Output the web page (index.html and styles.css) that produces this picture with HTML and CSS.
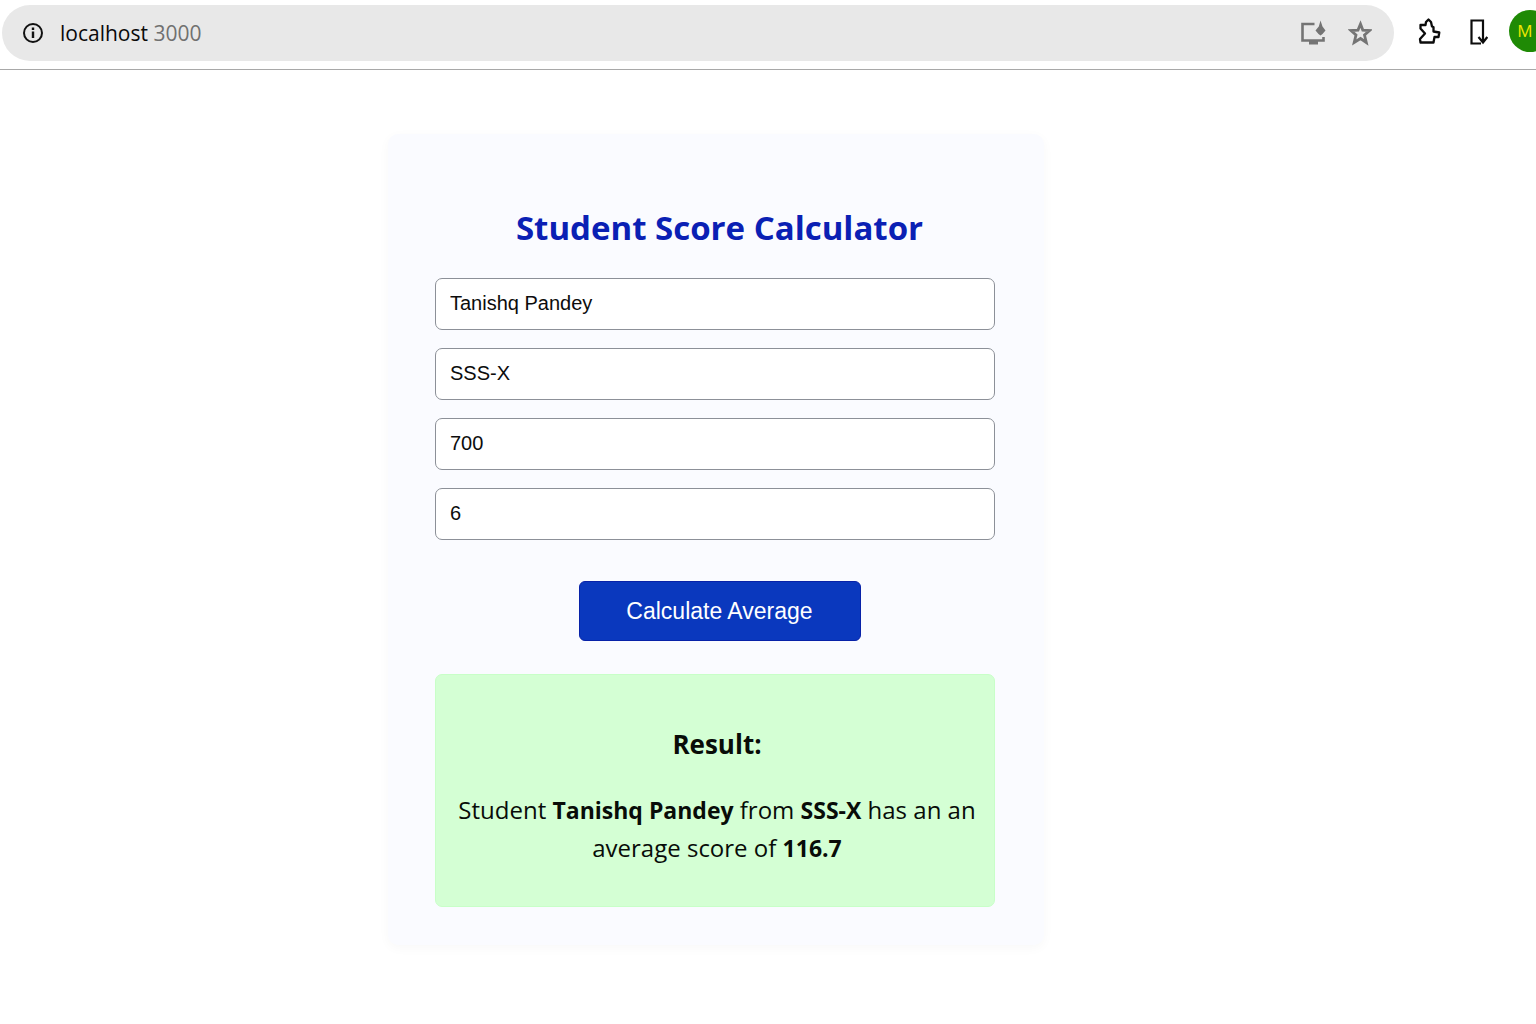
FILE: index.html
```html
<!DOCTYPE html>
<html lang="en">
<head>
<meta charset="utf-8">
<meta name="viewport" content="width=device-width, initial-scale=1">
<title>Student Score Calculator</title>
<link rel="stylesheet" href="styles.css">
</head>
<body>
<header class="toolbar">
  <div class="address">
    <button class="icon-button" type="button" aria-label="Site information">
      <svg width="22" height="22" viewBox="0 0 22 22" fill="none" stroke="#111" stroke-width="2"><circle cx="11" cy="11" r="9"/><path d="M11 9.5V16M11 5.5V8" stroke-width="2.4"/></svg>
    </button>
    <a class="url" href="#">localhost <span class="port">3000</span></a>
    <div class="address-actions">
      <button class="icon-button" type="button" aria-label="Install app">
        <svg width="26" height="26" viewBox="0 0 26 26"><path d="M14.5 4H2.500V20.500H23.500V17" fill="none" stroke="#747474" stroke-width="2.600"/><path d="M9 21h9v3.500H9z" fill="#747474"/><path d="M20.500 0.500L22.500 6.500L25.500 10.500L22.500 14L20.500 15.500L18.500 14L15.500 10.500L18.800 6.500Z" fill="#747474"/></svg>
      </button>
      <button class="icon-button" type="button" aria-label="Bookmark this page">
        <svg width="24" height="26" viewBox="0 0 24 26" fill="none" stroke="#747474" stroke-width="2.800"><path d="M12.500 4L14.800 10.100L21.500 10.500L16.500 15L18.300 22.500L12.500 18.500L6.200 22.500L8 15L3 10.500L10 10.100Z"/></svg>
      </button>
    </div>
  </div>
  <nav class="browser-actions" aria-label="Browser">
    <button class="icon-button" type="button" aria-label="Extensions">
      <svg width="24" height="28" viewBox="0 0 24 28" fill="none" stroke="#0c0c0c" stroke-width="2.300" stroke-linejoin="round"><path d="M2.500 8H7.500L8 5L10.500 2.500L13 5L14 9.500L15.500 10V14.500L21.300 15.500L20.500 20H16.500L15.500 25.500H2.500L2 22L7 16.500L2.500 11.500Z"/></svg>
    </button>
    <button class="icon-button" type="button" aria-label="Downloads">
      <svg width="20" height="28" viewBox="0 0 20 28" fill="none" stroke="#0c0c0c" stroke-width="2.200"><path d="M15 17V3.500H3.500V26.500H13M15 12V25.500M10.500 20L15 25.500L19.300 20"/></svg>
    </button>
    <button class="avatar" type="button" aria-label="Profile M">M</button>
  </nav>
</header>
<main class="page">
  <section class="card">
    <h1 class="title">Student Score Calculator</h1>
    <form class="form">
      <input class="field" type="text" aria-label="Name" value="Tanishq Pandey">
      <input class="field" type="text" aria-label="School" value="SSS-X">
      <input class="field" type="text" inputmode="numeric" aria-label="Total marks" value="700">
      <input class="field" type="text" inputmode="numeric" aria-label="Number of subjects" value="6">
      <button class="submit" type="button">Calculate Average</button>
    </form>
    <section class="result">
      <h2 class="result-title">Result:</h2>
      <p class="result-text">Student <strong>Tanishq Pandey</strong> from <strong>SSS-X</strong> has an an average score of <strong>116.7</strong></p>
    </section>
  </section>
</main>
</body>
</html>
```
FILE: styles.css
```css
* { box-sizing: border-box; }
body {
  margin: 0;
  overflow-x: hidden;
  background: #fff;
  color: #080c08;
  font-family: "Open Sans", "Noto Sans", sans-serif;
}
.toolbar {
  display: flex;
  align-items: center;
  height: 70px;
  padding: 0 0 3px 2px;
  border-bottom: 1px solid #a8a8a8;
  overflow: hidden;
}
.address {
  display: flex;
  flex: 1;
  align-items: center;
  height: 56px;
  padding: 0 22px 0 20px;
  border-radius: 28px;
  background: #e8e8e8;
}
.icon-button {
  display: flex;
  padding: 0;
  border: 0;
  background: none;
}
.url {
  margin-left: 16px;
  color: #0a0a0a;
  font-size: 21px;
  line-height: 28px;
  text-decoration: none;
}
.port { color: #707070; }
.address-actions {
  display: flex;
  gap: 22px;
  margin-left: auto;
}
.browser-actions {
  display: flex;
  align-items: center;
  margin: 0 -15px 4px 24px;
}
.browser-actions .icon-button { margin-right: 26px; }
.browser-actions .icon-button + .icon-button { margin-right: 21px; }
.avatar {
  width: 42px;
  height: 42px;
  padding: 0 10px 0 0;
  border: 0;
  border-radius: 50%;
  background: #1f8a05;
  color: #f0e800;
  font: 17px/42px "Open Sans", sans-serif;
}
.page {
  display: flex;
  justify-content: center;
  padding: 64px 104px 72px 0;
}
.card {
  width: 100%;
  max-width: 656px;
  padding: 66px 40px 38px 47px;
  border-radius: 10px;
  background: #fafbff;
  box-shadow: 0 3px 12px rgba(0, 0, 0, 0.03);
}
.title {
  margin: 0 0 22px;
  color: #0a20b4;
  font-size: 33px;
  line-height: 56px;
  text-align: center;
}
.form {
  display: flex;
  flex-direction: column;
  gap: 18px;
}
.field {
  width: calc(100% - 9px);
  height: 52px;
  padding: 0 14px 2px;
  border: 1px solid #8c9098;
  border-radius: 7px;
  background: #fff;
  color: #0c0c0c;
  font: 20px "Liberation Sans", Arial, sans-serif;
}
.submit {
  align-self: center;
  width: 282px;
  height: 60px;
  margin: 23px 0 33px;
  padding: 0;
  border: 1px solid #0822a8;
  border-radius: 6px;
  background: #0a38be;
  color: #fff;
  font: 23px "Liberation Sans", Arial, sans-serif;
}
.result {
  width: calc(100% - 9px);
  padding: 48px 12px 39px 16px;
  border: 1px solid #c8ffc8;
  border-radius: 7px;
  background: #d4ffd4;
  text-align: center;
}
.result-title {
  margin: 0 0 26px;
  font-size: 26px;
  line-height: 42px;
}
.result-text {
  margin: 0;
  font-size: 24px;
  line-height: 38px;
}
.result-text strong { font-size: 23px; }
```
